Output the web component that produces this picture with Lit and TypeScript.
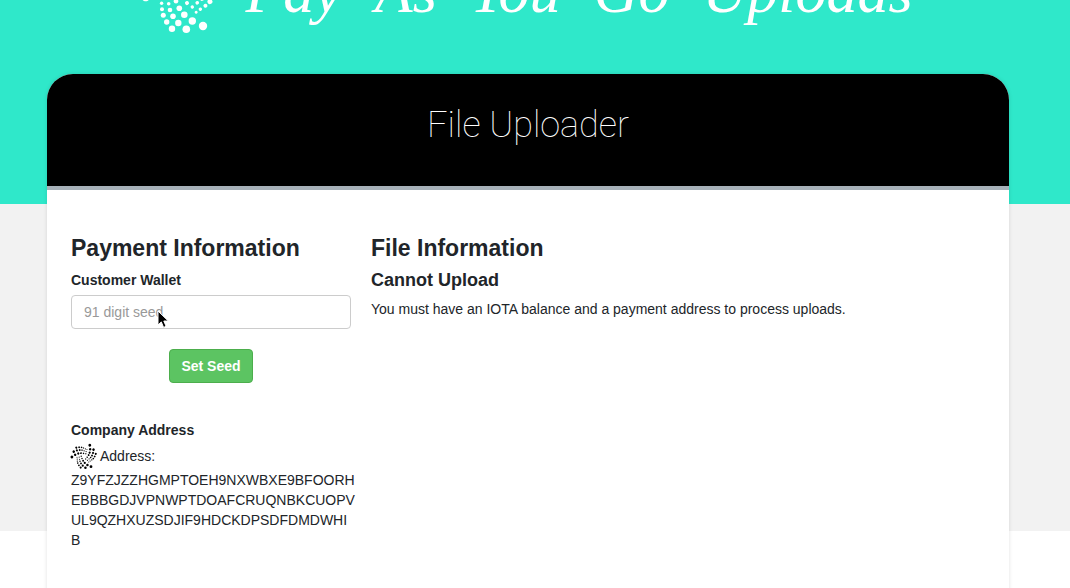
import { LitElement, html, svg, css } from "lit";
import { customElement, property, state } from "lit/decorators.js";

// One arm of the logo as [x, y, radius]; the mark repeats it three times round its centre.
const ARM: [number, number, number][] = [
  [18, 43, 1.5], [24.5, 42.3, 1.7], [30.6, 39.7, 2],
  [18.6, 48.2, 1.7], [25.7, 48.7, 1.8], [33, 46.3, 2.3],
  [19, 54.3, 2], [27, 55, 2.3], [36.3, 53.3, 2.8],
  [20.3, 60.3, 2.5], [30, 61.3, 2.8], [41.3, 59.7, 3.3],
  [23.7, 67, 2.7], [35.3, 68, 3.2], [49.3, 66, 3.7],
  [29, 73.7, 3.2], [43.3, 74.3, 3.8], [60, 71, 4.2],
];

@customElement("iota-mark")
export class IotaMark extends LitElement {
  static styles = css`
    :host { display: block; flex: none; }
    .mark { display: block; width: 100%; height: 100%; fill: currentColor; overflow: visible; }
  `;
  render() {
    return html`<svg class="mark" viewBox="0 0 78 78" aria-hidden="true">
      ${[0, 120, 240].map(
        (turn) => svg`<g transform="rotate(${turn} 39.7 40)">
          ${ARM.map(([x, y, r]) => svg`<circle cx=${x} cy=${y} r=${r}></circle>`)}
        </g>`
      )}
    </svg>`;
  }
}

@customElement("payment-panel")
export class PaymentPanel extends LitElement {
  @property({ attribute: false }) address: string[] = [];
  @state() private seed = "";

  static styles = css`
    :host { display: block; min-width: 0; }
    .title { margin: 0 0 8px; font-size: 23px; line-height: 28px; font-weight: bold; }
    .label { display: block; margin: 0 0 5px; font-weight: bold; }
    .form { margin: 0 0 37px; }
    .field { position: relative; }
    .input {
      box-sizing: border-box; display: block; width: 100%; height: 34px; padding: 0 12px;
      border: 1px solid #ccc; border-radius: 4px; background: #fff; color: #555;
      font: inherit;
    }
    .input::placeholder { color: #999; opacity: 1; }
    .pointer { position: absolute; left: 86px; top: 15px; width: 12px; height: 19px; pointer-events: none; }
    .button {
      display: block; height: 34px; margin: 20px auto 0; padding: 0 11px;
      border: 1px solid #4cae4c; border-radius: 4px; background: #5cc462; color: #fff;
      font: inherit; font-weight: bold; cursor: pointer;
    }
    .line { display: flex; align-items: center; gap: 3px; height: 21px; margin: 0 0 4px; }
    .icon { width: 26px; height: 26px; color: #000; }
    .address { margin: 0; white-space: nowrap; }
  `;

  private onInput(e: Event) {
    this.seed = (e.target as HTMLInputElement).value;
  }

  render() {
    return html`
      <h2 class="title">Payment Information</h2>
      <form class="form" @submit=${(e: Event) => e.preventDefault()}>
        <label class="label" for="seed">Customer Wallet</label>
        <div class="field">
          <input class="input" id="seed" type="text" placeholder="91 digit seed" .value=${this.seed} @input=${this.onInput} />
          <svg class="pointer" viewBox="0 0 12 19" aria-hidden="true">
            <path d="M1 1v14l3.3-3.1 2.3 5.5 2.5-1.1-2.3-5.3h4.5z" fill="#000" stroke="#fff" stroke-width="1"></path>
          </svg>
        </div>
        <button class="button" type="submit">Set Seed</button>
      </form>
      <strong class="label">Company Address</strong>
      <div class="line"><iota-mark class="icon"></iota-mark><span>Address:</span></div>
      <p class="address">${this.address.map((part, i) => html`${i ? html`<br />` : ""}${part}`)}</p>
    `;
  }
}

@customElement("app-root")
export class AppRoot extends LitElement {
  private address = [
    "Z9YFZJZZHGMPTOEH9NXWBXE9BFOORH",
    "EBBBGDJVPNWPTDOAFCRUQNBKCUOPV",
    "UL9QZHXUZSDJIF9HDCKDPSDFDMDWHI",
    "B",
  ];

  static styles = css`
    :host {
      display: flex; flex-direction: column; box-sizing: border-box; height: 100vh; overflow: hidden;
      padding: 0 61px 0 47px; color: #212529;
      background: linear-gradient(#2fe8ca 204px, #f2f2f2 204px 531px, #fff 531px);
      font-family: "Liberation Sans", Arial, sans-serif; font-size: 14px; line-height: 20px;
    }
    .hero { display: flex; justify-content: center; gap: 24px; margin: -45px 0 0; height: 119px; flex: none; color: #fff; }
    .logo { width: 78px; height: 78px; }
    .name {
      display: flex; gap: 33px; margin: 0; white-space: nowrap;
      font-family: "Liberation Serif", serif; font-style: italic; font-weight: normal;
      font-size: 62px; line-height: 72px;
    }
    .card { flex: 1 0 auto; background: #fff; border-radius: 26px 26px 0 0; box-shadow: 0 0 4px rgba(0, 0, 0, 0.12); }
    .head {
      padding: 26px 24px 36px; border-bottom: 4px solid #a7b1b9; border-radius: 26px 26px 0 0;
      background: #000; color: #fff; text-align: center;
    }
    .heading { margin: 0; font-family: Roboto, sans-serif; font-weight: 100; font-size: 36px; line-height: 50px; }
    .body { display: grid; grid-template-columns: 280px 1fr; gap: 20px; padding: 44px 24px; }
    .title { margin: 0 0 8px; font-size: 23px; line-height: 28px; font-weight: bold; }
    .status { margin: 0 0 9px; font-size: 18px; line-height: 20px; font-weight: bold; }
    .text { margin: 0; }
  `;

  render() {
    return html`
      <header class="hero">
        <iota-mark class="logo"></iota-mark>
        <h1 class="name">
          ${["Pay", "As", "You", "Go", "Uploads"].map((word) => html`<span>${word}</span>`)}
        </h1>
      </header>
      <main class="card">
        <div class="head"><h2 class="heading">File Uploader</h2></div>
        <div class="body">
          <payment-panel .address=${this.address}></payment-panel>
          <section>
            <h2 class="title">File Information</h2>
            <h3 class="status">Cannot Upload</h3>
            <p class="text">You must have an IOTA balance and a payment address to process uploads.</p>
          </section>
        </div>
      </main>
    `;
  }
}
